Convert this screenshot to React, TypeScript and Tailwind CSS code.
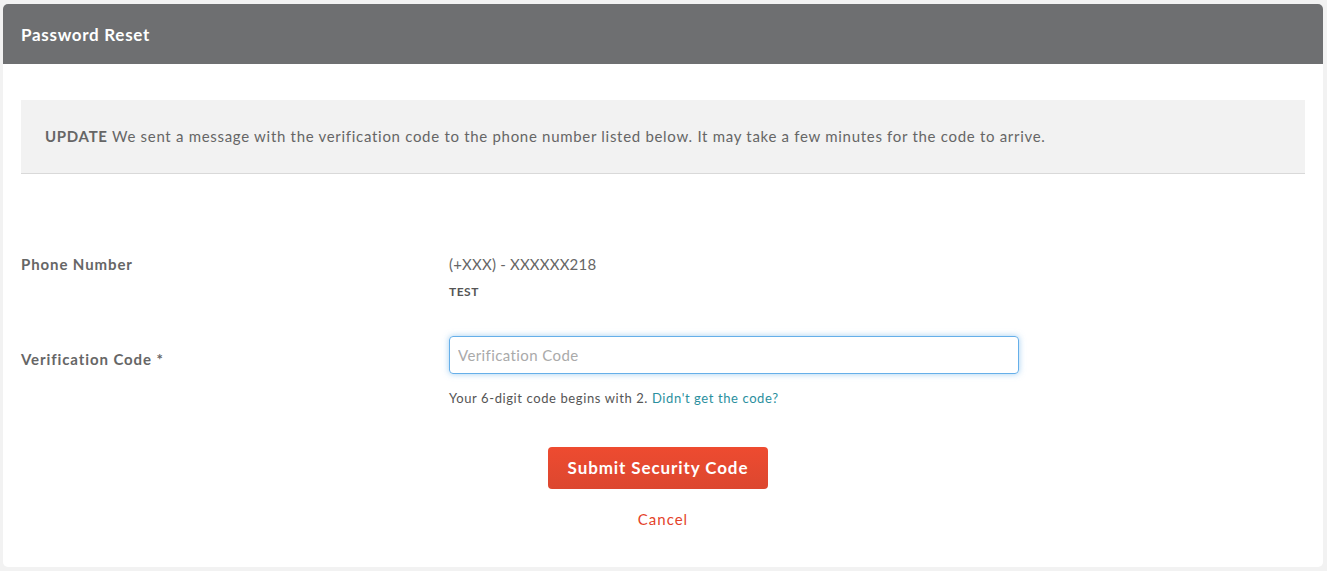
import React from "react";

export default function App() {
  return (
    <div className="min-h-[571px] bg-[#f2f2f2] pt-[4px] px-[3px] pr-[4px] font-['Lato','Open_Sans',sans-serif]">
      <div className="bg-white rounded-[5px] overflow-hidden h-[563px]">
        {/* Header */}
        <div className="h-[60px] bg-[#6e6f71] flex items-center px-[18px] pt-[2px]">
          <h1 className="text-white text-[17px] font-bold tracking-[0.7px]">Password Reset</h1>
        </div>

        <div className="px-[18px] pt-[36px]">
          {/* Update notice */}
          <div className="bg-[#f2f2f2] border-b border-[#d9d9d9] h-[74px] flex items-center px-[24px] text-[15px] text-[#666] tracking-[0.7px]">
            <p>
              <span className="font-bold">UPDATE</span> We sent a message with the verification code to the phone number listed below. It may take a few minutes for the code to arrive.
            </p>
          </div>

          {/* Phone number */}
          <div className="flex mt-[79px]">
            <div className="w-[428px] text-[15px] font-bold text-[#666] leading-[22px] tracking-[0.9px]">Phone Number</div>
            <div>
              <div className="text-[15px] text-[#666] leading-[22px] tracking-[0.2px]">(+XXX) - XXXXXX218</div>
              <div className="text-[12px] font-bold text-[#555] mt-[8px] tracking-[0.5px]">TEST</div>
            </div>
          </div>

          {/* Verification code */}
          <div className="flex mt-[35px]">
            <div className="w-[428px] text-[15px] font-bold text-[#666] pt-[12px] tracking-[0.9px]">Verification Code *</div>
            <div>
              <input
                autoFocus
                placeholder="Verification Code"
                className="w-[570px] h-[38px] rounded-[4px] border border-[#66afe9] px-[8px] text-[15px] text-[#555] placeholder:text-[#aaa] tracking-[0.4px] outline-none shadow-[0_0_6px_rgba(102,175,233,0.6)]"
              />
              <p className="text-[13px] text-[#555] mt-[15px] tracking-[0.6px]">
                Your 6-digit code begins with 2.{" "}
                <a href="#" className="text-[#2a8f9e]">Didn&apos;t get the code?</a>
              </p>
            </div>
          </div>

          {/* Actions */}
          <div className="flex flex-col items-center mt-[38px]">
            <button className="w-[220px] h-[42px] mr-[10px] rounded-[4px] bg-gradient-to-b from-[#ee4b30] to-[#dc472f] text-white text-[17px] font-bold tracking-[0.9px]">
              Submit Security Code
            </button>
            <a href="#" className="mt-[19px] text-[15px] text-[#e4432a] tracking-[1px]">Cancel</a>
          </div>
        </div>
      </div>
    </div>
  );
}
